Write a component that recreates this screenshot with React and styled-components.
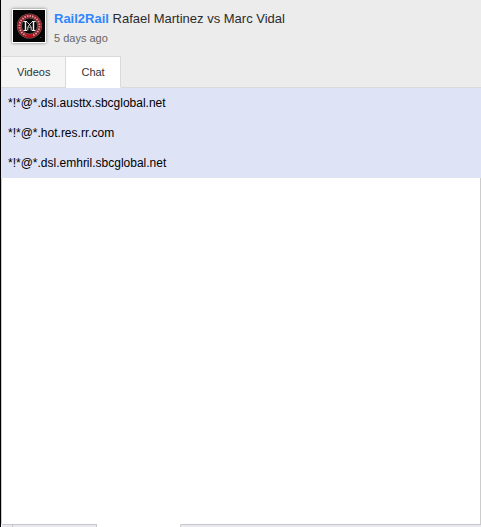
import React, { useState } from 'react'
import styled, { createGlobalStyle } from 'styled-components'

const bans = [
  '*!*@*.dsl.austtx.sbcglobal.net',
  '*!*@*.hot.res.rr.com',
  '*!*@*.dsl.emhril.sbcglobal.net',
]

const tabs = ['Videos', 'Chat']

const Logo = () => (
  <svg width="32" height="32" viewBox="0 0 32 32" role="img" aria-label="Rail2Rail">
    <rect width="32" height="32" fill="#060606" />
    <circle cx="16.5" cy="16" r="12.6" fill="#6c5a5a" />
    <circle cx="16.5" cy="16" r="12" fill="#8f1822" />
    <circle cx="16.5" cy="16" r="10" fill="none" stroke="#d39a9c" strokeWidth="2" strokeDasharray="1.5 1.1" />
    <path d="M13 25.3a10 10 0 0 0 7 0" fill="none" stroke="#b5101c" strokeWidth="3.2" />
    <circle cx="16.5" cy="16" r="8" fill="#080808" stroke="#8d7c7c" strokeWidth="0.6" />
    <g fill="none" stroke="#eee">
      <path d="M10.5 11.5h3.5M10.5 20.5h3.5M19 11.5h3.5M19 20.5h3.5" strokeWidth="1" />
      <path d="M12.5 11.5v9M20.5 11.5v9" strokeWidth="1.4" />
      <path d="M14.2 12.2l2.3 2.3 2.3-2.3M14.8 20.5v-3.3l1.7-2.7 1.7 2.7v3.3" strokeWidth="0.9" />
      <path d="M14.8 17.5h3.4" stroke="#999" strokeWidth="0.8" />
    </g>
    <path d="M27 27.5h1.5" stroke="#555" strokeWidth="0.8" />
  </svg>
)

const App = () => {
  const [active, setActive] = useState('Chat')
  return (
    <Page>
      <GlobalStyle />
      <Header>
        <Channel>
          <Avatar>
            <Logo />
          </Avatar>
          <div>
            <Title>
              <ChannelLink href="#channel">Rail2Rail</ChannelLink> Rafael Martinez vs Marc Vidal
            </Title>
            <Posted>5 days ago</Posted>
          </div>
        </Channel>
        <TabBar role="tablist">
          {tabs.map(tab => (
            <Tab
              key={tab}
              type="button"
              role="tab"
              aria-selected={tab === active}
              $active={tab === active}
              onClick={() => setActive(tab)}
            >
              {tab}
            </Tab>
          ))}
        </TabBar>
      </Header>
      <Body>
        <BanList>
          {bans.map(mask => (
            <Ban key={mask}>{mask}</Ban>
          ))}
        </BanList>
      </Body>
      <Footer>
        <FooterCell $width="11px" />
        <FooterCell $width="84px" />
        <FooterCell $width="84px" $open />
        <FooterCell />
      </Footer>
    </Page>
  )
}

const GlobalStyle = createGlobalStyle`
  * {
    box-sizing: border-box;
  }
  body {
    margin: 0;
    background: #fff;
    font-family: "Liberation Sans", Arial, sans-serif;
  }
`
const Page = styled.div`
  display: flex;
  flex-direction: column;
  min-height: 100vh;
  border-left: 1px solid #000;
`
const Header = styled.header`
  padding-top: 9px;
  background: #ececec;
`
const Channel = styled.div`
  display: flex;
  gap: 8px;
  padding: 0 11px 9px;
`
const Avatar = styled.div`
  flex: none;
  width: 34px;
  height: 34px;
  border: 1px solid #fff;
  box-shadow: 0 0 3px rgba(0, 0, 0, 0.5);
  svg {
    display: block;
  }
`
const Title = styled.h1`
  margin: 0;
  color: #2b2b2b;
  font-size: 13px;
  font-weight: normal;
  line-height: 20px;
`
const ChannelLink = styled.a`
  color: #2f86ff;
  font-weight: bold;
  text-decoration: none;
`
const Posted = styled.div`
  color: #666;
  font-size: 11px;
  line-height: 18px;
`
const TabBar = styled.div`
  display: flex;
  height: 32px;
  padding-left: 1px;
  box-shadow: inset 0 -1px #dadada;
`
const Tab = styled.button`
  padding: 0 15px;
  border: solid #dadada;
  border-width: 1px 1px 1px 0;
  border-bottom-color: ${props => (props.$active ? '#fff' : '#dadada')};
  background: ${props => (props.$active ? '#fff' : '#f5f5f5')};
  color: #333;
  font-family: inherit;
  font-size: 11px;
  cursor: pointer;
`
const Body = styled.main`
  flex: 1;
  border: solid #ccc;
  border-width: 0 1px;
  background: #fff;
`
const BanList = styled.ul`
  margin: 0 -1px;
  padding: 0;
  background: #dee3f6;
  list-style: none;
`
const Ban = styled.li`
  padding: 0 7px;
  color: #000;
  font-size: 12px;
  line-height: 30px;
`
const Footer = styled.div`
  display: flex;
  height: 3px;
  padding-left: 1px;
`
const FooterCell = styled.div`
  flex: ${props => (props.$width ? `0 0 ${props.$width}` : 1)};
  border-top: 1px solid ${props => (props.$open ? '#fff' : '#c8c8cc')};
  border-right: ${props => (props.$width ? '1px solid #c8c8cc' : 0)};
  background: ${props => (props.$open ? '#fff' : '#e8e8ee')};
`

export default App
